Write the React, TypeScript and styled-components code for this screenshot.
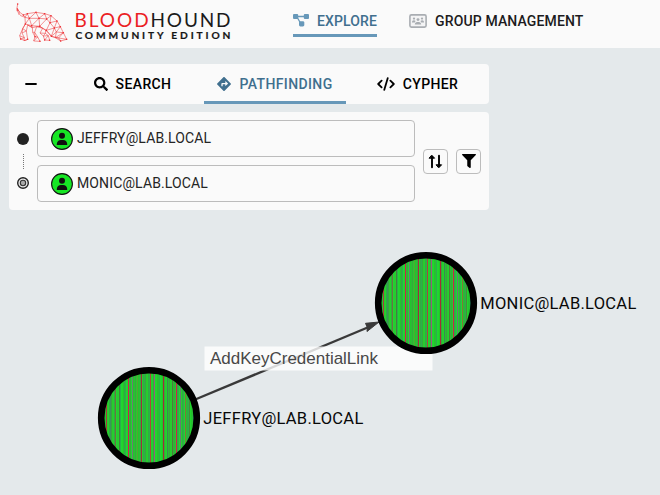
import React from "react";
import styled, { createGlobalStyle } from "styled-components";
import { FaSearch, FaCode, FaFilter, FaDirections } from "react-icons/fa";

const Global = createGlobalStyle`
  * { box-sizing: border-box; }
  body { margin: 0; background: #e4e9eb; font-family: Roboto, sans-serif; }
  svg { display: block; flex: none; }
`;

const Page = styled.div`
  position: relative;
  width: 660px;
  height: 495px;
  overflow: hidden;
  background: #e4e9eb;
`;

const Header = styled.header`
  display: flex;
  height: 48px;
  background: #fafafa;
`;

const Logo = styled.svg`
  width: 293px;
  height: 48px;
`;

const NavItem = styled.a<{ $active?: boolean }>`
  display: flex;
  align-items: center;
  gap: 8px;
  height: 32px;
  margin: 5px 32px 0 0;
  padding-top: 2px;
  border-bottom: 3px solid ${(p) => (p.$active ? "#6798b9" : "transparent")};
  color: ${(p) => (p.$active ? "#406f8e" : "#1d1b20")};
  font-size: 14px;
  font-weight: 500;
  letter-spacing: 0.13px;
  white-space: nowrap;
`;

const Sidebar = styled.main`
  display: flex;
  flex-direction: column;
  gap: 8px;
  width: 480px;
  margin: 16px 0 0 9px;
`;

const Tabs = styled.nav`
  display: grid;
  grid-template-columns: 52px 143px 142px 143px;
  height: 40px;
  border-radius: 4px;
  background: #fafafa;
`;

const Collapse = styled.button`
  display: flex;
  align-items: center;
  border: 0;
  padding: 0 0 0 16px;
  background: none;
`;

const Tab = styled.div<{ $active?: boolean }>`
  display: flex;
  align-items: center;
  justify-content: center;
  gap: 8px;
  padding-top: 3px;
  border-bottom: 3px solid ${(p) => (p.$active ? "#6798b9" : "transparent")};
  color: ${(p) => (p.$active ? "#406f8e" : "#000")};
  font-size: 14px;
  font-weight: 500;
  letter-spacing: 0.38px;
`;

const SearchPanel = styled.section`
  display: flex;
  align-items: center;
  height: 98px;
  padding: 0 8px;
  gap: 8px;
  border-radius: 4px;
  background: #fafafa;
`;

const RouteMarks = styled.svg`
  width: 12px;
  height: 98px;
`;

const Fields = styled.div`
  display: flex;
  flex-direction: column;
  gap: 8px;
  width: 378px;
`;

const Field = styled.div`
  display: flex;
  align-items: center;
  gap: 4px;
  height: 37px;
  padding: 0 13px;
  border: 1px solid #bcbcbc;
  border-radius: 4px;
`;

const FieldText = styled.span`
  color: #252525;
  font-size: 14px;
  line-height: 18px;
  letter-spacing: 0.13px;
  margin-top: -2px;
`;

const SquareButton = styled.button`
  display: flex;
  align-items: center;
  justify-content: center;
  width: 25px;
  height: 25px;
  padding: 0;
  border: 1px solid #bcbcbc;
  border-radius: 4px;
  background: #fafafa;
`;

const Graph = styled.svg`
  position: absolute;
  left: 0;
  top: 210px;
`;

const Hound = () => (
  <g transform="scale(.33333)" fill="none" stroke="#ed2b30" strokeWidth="1.9" strokeOpacity=".8" strokeLinejoin="round">
    <path d="M53 12 51 24 58 36 70 45 82 41 108 37 134 41 153 47 171 63 181 80 190 98 200 118 182 123 166 113 154 109 148 101 137 91 128 85 110 80 97 83 83 75 79 93 83 118 72 122 73 113 66 99 68 86 76 72 75 52 62 47 52 34 51 24 58 36 56 44" />
    <path d="M70 45 75 52 82 41 88 55 108 37 117 55 134 41 140 57 153 47 150 68 171 63 163 84 181 80 169 96 190 98 176 114 200 118" />
    <path d="M75 52 88 55 76 72 95 77 88 55 117 55 95 77 119 79 117 55 140 57 119 79 139 91 150 68 140 57M150 68 163 84 139 91 154 109 163 84 169 96 154 109 176 114 182 123M169 96 166 113 190 98M176 114 166 113" />
    <path d="M76 72 68 86 59 107 62 117 75 122 83 118M68 86 79 93 66 99M97 83 98 97 105 110 101 123 120 124 113 111 104 97 110 80M98 97 104 97 105 110 113 111 101 123M128 85 120 99 130 108 134 120 149 121 145 107 136 100 137 91M120 99 136 100 130 108 145 107 134 120M59 107 73 113 62 117" />
    <path d="M83 75 97 83 95 77M110 80 119 79 128 85" />
    <g fill="#ed2b30" stroke="none">
      {[[53,12],[52,30],[70,45],[82,41],[108,37],[134,41],[153,47],[171,63],[181,80],[190,98],[200,118],[182,123],[88,55],[117,55],[140,57],[76,72],[95,77],[119,79],[150,68],[163,84],[139,91],[154,109],[62,117],[83,118],[105,110],[120,124],[134,120],[149,121]].map(([x, y]) => (
        <circle key={`${x}-${y}`} cx={x} cy={y} r="2.3" />
      ))}
    </g>
  </g>
);

const Person = () => (
  <svg width="22" height="22" viewBox="0 0 22 22">
    <circle cx="11" cy="11" r="10.4" fill="#17e625" stroke="#101010" strokeWidth="1.1" />
    <circle cx="11" cy="7.8" r="3" fill="#101010" />
    <path d="M5.8 17v-1c0-2.5 2-4.1 4.2-4.1h2c2.3 0 4.2 1.6 4.2 4.1v1Z" fill="#101010" />
  </svg>
);

const GroupIcon = () => (
  <svg width="18" height="14" viewBox="0 0 18 14" fill="#a9adb2">
    <rect x=".9" y=".9" width="16.2" height="12.2" rx="1.5" fill="#f4f4f5" stroke="#a9adb2" strokeWidth="1.6" />
    <circle cx="5" cy="4.6" r="1.15" />
    <circle cx="13" cy="4.6" r="1.15" />
    <circle cx="9" cy="5.6" r="1.45" />
    <path d="M3 8.3c0-1.3.7-2 1.8-2 .8 0 1.4.3 1.7.8L5.8 8.6H3ZM15 8.3c0-1.3-.7-2-1.8-2-.8 0-1.4.3-1.7.8l.7 1.5H15ZM5.8 10.6c0-1.6 1-2.5 2.4-2.5h1.6c1.4 0 2.4.9 2.4 2.5Z" />
  </svg>
);

const BASE = ["#20d52b", "#2abd35", "#28ca2e", "#32aa42", "#1fd732", "#22c52d", "#36a83c", "#24d02e", "#2ab14a"];
const ACCENTS: Record<number, string> = {
  3: "#a83a3c", 7: "#39965a", 12: "#6b7340", 16: "#457e40", 25: "#cc234a",
  29: "#6f7a70", 34: "#53a333", 38: "#a02e3c", 47: "#a84a38", 51: "#94607a",
  60: "#a42c38", 64: "#3b8a50", 69: "#51783c", 73: "#cc234a", 77: "#667970",
  82: "#807638", 86: "#478b38", 90: "#299570",
};

const GraphNode = ({ id, x, y, label }: { id: string; x: number; y: number; label: string }) => (
  <g>
    <clipPath id={id}><circle cx={x} cy={y} r="46" /></clipPath>
    <g clipPath={`url(#${id})`} shapeRendering="crispEdges">
      {Array.from({ length: 94 }, (_, i) => (
        <rect key={i} x={x - 46 + i} y={y - 47} width="1" height="94" fill={ACCENTS[i] || BASE[(i * 4 + (i % 7)) % BASE.length]} />
      ))}
    </g>
    <circle cx={x} cy={y} r="47.8" fill="none" stroke="#000" strokeWidth="6.6" />
    <text x={x + 54.3} y={y + 6} fontFamily="Roboto" fontSize="16.5" fill="#080808" textLength={id === "source" ? 160 : 156}>{label}</text>
  </g>
);

export default function App() {
  return (
    <>
      <Global />
      <Page>
        <Header>
          <Logo viewBox="0 0 293 48">
            <Hound />
            <text x="74.6" y="27.3" fontFamily="Lato" fontSize="19" fill="#eb1e24" textLength="74">BLOOD</text>
            <text x="150.5" y="27.3" fontFamily="Lato" fontSize="19" fill="#1b1b1b" textLength="80">HOUND</text>
            <text x="75.4" y="39" fontFamily="Lato" fontSize="10.2" fontWeight="700" fill="#151515" stroke="#151515" strokeWidth=".2" textLength="155">COMMUNITY EDITION</text>
          </Logo>
          <NavItem $active>
            <svg width="16" height="13" viewBox="0 0 16 13" fill="#6798b9">
              <path d="M4.5 2.5h7M4 3l4 7" stroke="#6798b9" strokeWidth="1.3" />
              <rect width="5.2" height="5" rx="1" /><rect x="10.8" width="5.2" height="5" rx="1" /><rect x="6" y="7.2" width="5.3" height="5.3" rx="1.4" />
            </svg>
            EXPLORE
          </NavItem>
          <NavItem><GroupIcon />GROUP MANAGEMENT</NavItem>
        </Header>
        <Sidebar>
          <Tabs>
            <Collapse aria-label="Collapse">
              <svg width="12" height="4" viewBox="0 0 12 4"><path d="M1 2h10" stroke="#000" strokeWidth="1.8" strokeLinecap="round" /></svg>
            </Collapse>
            <Tab><FaSearch size={14} />SEARCH</Tab>
            <Tab $active><FaDirections size={14} />PATHFINDING</Tab>
            <Tab>
              <svg width="18" height="14" viewBox="0 0 18 14" fill="none" stroke="#000" strokeWidth="1.8" strokeLinecap="round" strokeLinejoin="round">
                <path d="M4.6 3.7 1.2 7l3.4 3.3M13.4 3.7 16.8 7l-3.4 3.3M10.7 1.2 7.3 12.8" />
              </svg>
              CYPHER
            </Tab>
          </Tabs>
          <SearchPanel>
            <RouteMarks viewBox="0 0 12 98">
              <circle cx="6" cy="27" r="6" fill="#222" />
              <path d="M6.5 42v16" stroke="#777" strokeDasharray="1 1" />
              <circle cx="6" cy="71" r="5.3" fill="#eee" stroke="#222" strokeWidth="1.4" />
              <circle cx="6" cy="71" r="2.7" fill="#aaa" stroke="#333" strokeWidth="1.1" />
            </RouteMarks>
            <Fields>
              <Field><Person /><FieldText>JEFFRY@LAB.LOCAL</FieldText></Field>
              <Field><Person /><FieldText>MONIC@LAB.LOCAL</FieldText></Field>
            </Fields>
            <SquareButton aria-label="Swap">
              <svg width="15" height="15" viewBox="0 0 15 15" stroke="#000" strokeWidth="1.9" strokeLinecap="round" strokeLinejoin="round">
                <path d="M4 13.3V3M11 1.7V12" />
                <path d="M1.4 4.2h5.2L4 1.4ZM8.4 10.8h5.2L11 13.6Z" strokeWidth="1" />
              </svg>
            </SquareButton>
            <SquareButton aria-label="Filter"><FaFilter size={14} color="#000" /></SquareButton>
          </SearchPanel>
        </Sidebar>
        <Graph width="660" height="285" viewBox="0 210 660 285">
          <path d="M194 400 370 326.5" stroke="#393939" strokeWidth="2.4" />
          <path d="m379 322-12 9.5.3-4-1.8-4.2Z" fill="#393939" stroke="#393939" />
          <rect x="204.5" y="346.5" width="228" height="24" fill="#fff" fillOpacity=".8" />
          <text x="210" y="364" fontFamily="Liberation Sans" fontSize="17" fill="#484848" textLength="168">AddKeyCredentialLink</text>
          <GraphNode id="target" x={426} y={303} label="MONIC@LAB.LOCAL" />
          <GraphNode id="source" x={149} y={418} label="JEFFRY@LAB.LOCAL" />
        </Graph>
      </Page>
    </>
  );
}
